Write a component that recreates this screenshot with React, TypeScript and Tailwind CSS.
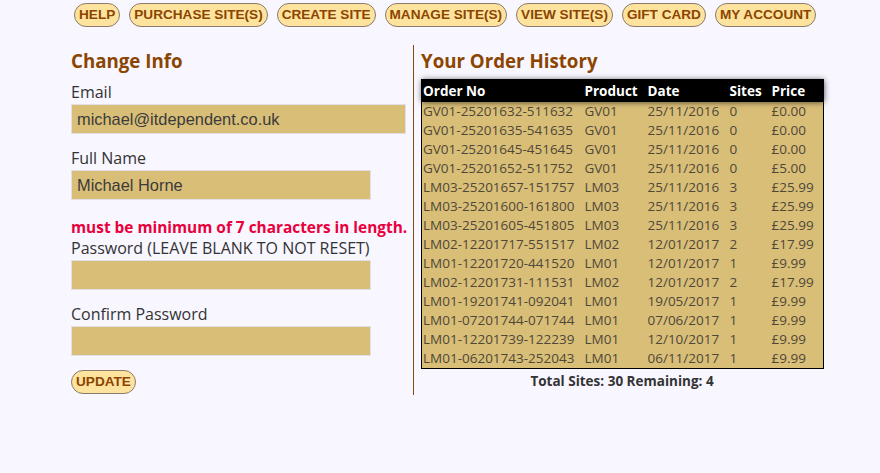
import React from "react";

const navItems = ["HELP", "PURCHASE SITE(S)", "CREATE SITE", "MANAGE SITE(S)", "VIEW SITE(S)", "GIFT CARD", "MY ACCOUNT"];

const orders: [string, string, string, string, string][] = [
  ["GV01-25201632-511632", "GV01", "25/11/2016", "0", "£0.00"],
  ["GV01-25201635-541635", "GV01", "25/11/2016", "0", "£0.00"],
  ["GV01-25201645-451645", "GV01", "25/11/2016", "0", "£0.00"],
  ["GV01-25201652-511752", "GV01", "25/11/2016", "0", "£5.00"],
  ["LM03-25201657-151757", "LM03", "25/11/2016", "3", "£25.99"],
  ["LM03-25201600-161800", "LM03", "25/11/2016", "3", "£25.99"],
  ["LM03-25201605-451805", "LM03", "25/11/2016", "3", "£25.99"],
  ["LM02-12201717-551517", "LM02", "12/01/2017", "2", "£17.99"],
  ["LM01-12201720-441520", "LM01", "12/01/2017", "1", "£9.99"],
  ["LM02-12201731-111531", "LM02", "12/01/2017", "2", "£17.99"],
  ["LM01-19201741-092041", "LM01", "19/05/2017", "1", "£9.99"],
  ["LM01-07201744-071744", "LM01", "07/06/2017", "1", "£9.99"],
  ["LM01-12201739-122239", "LM01", "12/10/2017", "1", "£9.99"],
  ["LM01-06201743-252043", "LM01", "06/11/2017", "1", "£9.99"],
];

const sans = "font-['Open_Sans','Noto_Sans',sans-serif]";

function Btn({ children }: { children: React.ReactNode }) {
  return (
    <span className="inline-flex h-[24px] items-center rounded-full border border-[#8a7b6c] bg-[#fde39e] px-[4px] font-['Liberation_Sans',Arial,sans-serif] text-[13.6px] font-bold leading-none text-[#8b4500]">
      {children}
    </span>
  );
}

function Field({ label, value, wide }: { label: string; value?: string; wide?: boolean }) {
  return (
    <div className="flex flex-col">
      <label className={`${sans} h-[21px] text-[16px] leading-[21px] text-[#333333]`}>{label}</label>
      <div
        className={`mt-[1px] flex h-[30px] items-center border border-[#e2dfe8] bg-[#d9be78] pl-[5px] font-['Liberation_Sans',Arial,sans-serif] text-[16.4px] text-[#3b3b3b] ${
          wide ? "w-[335px]" : "w-[300px]"
        }`}
      >
        {value}
      </div>
    </div>
  );
}

export default function App() {
  return (
    <div className="min-h-[473px] w-full bg-[#f8f6ff]">
      <nav className="flex gap-[9px] pl-[74px] pt-[3px]">
        {navItems.map((n) => (
          <Btn key={n}>{n}</Btn>
        ))}
      </nav>

      <div className="mt-[18px] flex pl-[71px]">
        <div className="w-[342px] pb-[1px]">
          <h2 className={`${sans} mt-[2px] text-[18.7px] font-bold leading-[27px] text-[#8b4500]`}>Change Info</h2>
          <div className="mt-[8px]">
            <Field label="Email" value="michael@itdependent.co.uk" wide />
          </div>
          <div className="mt-[14px]">
            <Field label="Full Name" value="Michael Horne" />
          </div>
          <div className={`${sans} mt-[17px] text-[15.4px] font-bold leading-[21px] text-[#e8003d]`}>
            must be minimum of 7 characters in length.
          </div>
          <Field label="Password (LEAVE BLANK TO NOT RESET)" />
          <div className="mt-[14px]">
            <Field label="Confirm Password" />
          </div>
          <div className="mt-[12px]">
            <Btn>UPDATE</Btn>
          </div>
        </div>

        <div className="w-0 border-l border-[#8b4513]" />

        <div className="pl-[7px]">
          <h2 className={`${sans} mt-[2px] text-[18.7px] font-bold leading-[27px] text-[#8b4500]`}>Your Order History</h2>
          <table className={`${sans} mt-[5px] w-[402px] table-fixed border-collapse border border-black bg-[#d9be78] text-[13.5px]`}>
            <colgroup>
              <col className="w-[162px]" />
              <col className="w-[63px]" />
              <col className="w-[82px]" />
              <col className="w-[42px]" />
              <col className="w-[53px]" />
            </colgroup>
            <thead>
              <tr className="h-[22px] bg-black text-white shadow-[0_0_6px_rgba(0,0,0,0.7)]">
                {["Order No", "Product", "Date", "Sites", "Price"].map((h) => (
                  <th key={h} className="pl-[1px] text-left font-bold leading-[20px]">
                    {h}
                  </th>
                ))}
              </tr>
            </thead>
            <tbody>
              {orders.map((r) => (
                <tr key={r[0]} className="h-[19px] text-[#4f4838]">
                  {r.map((c, i) => (
                    <td key={i} className="whitespace-nowrap p-0 pl-[1px] leading-[19px]">
                      {c}
                    </td>
                  ))}
                </tr>
              ))}
            </tbody>
          </table>
          <div className={`${sans} mt-[2px] w-[402px] text-center text-[13.5px] font-bold leading-[20px] text-[#333333]`}>
            Total Sites: 30 Remaining: 4
          </div>
        </div>
      </div>
    </div>
  );
}
